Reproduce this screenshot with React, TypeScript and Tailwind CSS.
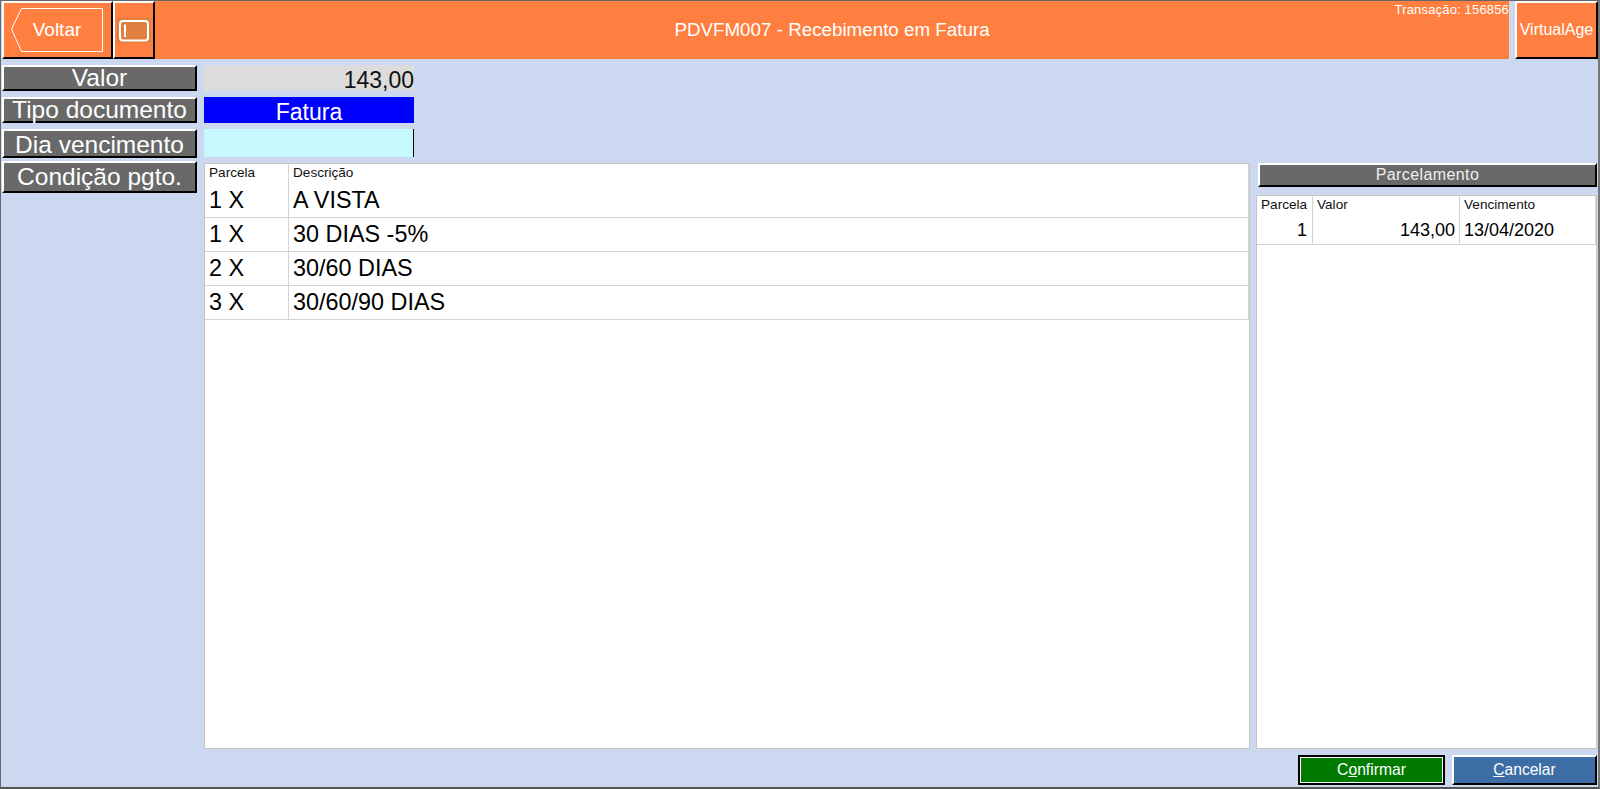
const font = "font-['Liberation_Sans',Arial,sans-serif]";

function Label({ text, h, mb, extra = "" }: { text: string; h: string; mb: string; extra?: string }) {
  return (
    <div className={`${h} ${mb} ${extra} flex items-center justify-center border-2 border-t-white border-l-white border-r-black border-b-black bg-[#696969] text-[24.5px] leading-none text-white`}>
      {text}
    </div>
  );
}

function GridHead({ cols, labels }: { cols: string; labels: string[] }) {
  return (
    <div className={`grid ${cols} h-[19px] text-[13.6px] leading-[17px] text-[#111]`}>
      {labels.map((l) => (
        <div key={l} className="border-r border-[#d4d4d4] pl-[4px] overflow-hidden whitespace-nowrap">{l}</div>
      ))}
    </div>
  );
}

export default function App() {
  const rows = [
    ["1 X", "A VISTA"],
    ["1 X", "30 DIAS -5%"],
    ["2 X", "30/60 DIAS"],
    ["3 X", "30/60/90 DIAS"],
  ];
  return (
    <div className={`${font} w-[1600px] h-[789px] overflow-hidden flex flex-col bg-[#ccd8ef] border-t border-t-[#666] border-l border-l-[#666] border-r-2 border-r-[#777] border-b-2 border-b-[#555] pl-[1px]`}>
      <header className="flex h-[58px] shrink-0 text-white">
        <button className="relative w-[111px] flex items-center justify-center border-2 border-t-white border-l-white border-r-black border-b-black bg-[#ff7f41] text-[19px] pr-[1px]">
          <svg className="absolute left-0 top-0" width="107" height="54" viewBox="0 0 107 54">
            <path d="M17.5 5.5H98.5V48.5H17.5L7.5 26Z" fill="none" stroke="#fff" strokeWidth="1" />
          </svg>
          <span className="relative">Voltar</span>
        </button>
        <button className="w-[42px] flex items-center justify-center border-2 border-t-white border-l-white border-r-black border-b-black bg-[#ff7f41]">
          <svg width="34" height="25" viewBox="0 0 34 25">
            <rect width="34" height="25" fill="#de8140" />
            <rect x="3" y="3" width="28" height="19.5" rx="3" fill="none" stroke="#fff" strokeWidth="2" />
            <path d="M8 6.5V19" stroke="#fff" strokeWidth="2" />
          </svg>
        </button>
        <div className="relative flex-1 flex items-center justify-center bg-[#ff7f41] text-[18.8px]">
          PDVFM007 - Recebimento em Fatura
          <span className="absolute right-0 top-[1px] text-[13px] leading-[16px] tracking-[0.17px]">Transação: 156856</span>
        </div>
        <button className="ml-[6px] w-[83px] flex items-center justify-center border-2 border-t-white border-l-white border-r-black border-b-black bg-[#ff7f41] text-[16px]">
          VirtualAge
        </button>
      </header>

      <main className="flex-1 min-h-0 flex flex-col pt-[6px] pr-[1px]">
        <div className="flex-1 min-h-0 flex">
          <aside className="w-[195px] shrink-0 flex flex-col">
            <Label text="Valor" h="h-[26px]" mb="mb-[6px]" />
            <Label text="Tipo documento" h="h-[26px]" mb="mb-[6px]" />
            <Label text="Dia vencimento" h="h-[29px]" mb="mb-[3px]" extra="pt-[3px]" />
            <Label text="Condição pgto." h="h-[32px]" mb="mb-0" />
          </aside>

          <div className="ml-[7px] flex-1 min-w-0 flex flex-col">
            <div className="w-[210px] h-[26px] mb-[6px] bg-[#dcdcdc] text-[23px] leading-[30px] text-right text-[#111]">143,00</div>
            <div className="w-[210px] h-[26px] mb-[6px] bg-[#0000ff] text-[23px] leading-[31px] text-center text-white">Fatura</div>
            <div className="w-[210px] h-[28px] mb-[6px] bg-[#c6f8fe] border-r border-r-black"></div>

            <div className="flex-1 min-h-0 flex">
              <section className="w-[1046px] bg-white border border-[#c4c4c4]">
                <GridHead cols="grid-cols-[84px_960px]" labels={["Parcela", "Descrição"]} />
                {rows.map(([a, b], i) => (
                  <div key={i} className={`grid grid-cols-[84px_960px] ${i === 0 ? "h-[35px] leading-[34px]" : "h-[34px] leading-[32px]"} border-b border-[#d4d4d4] text-[23.4px] text-black`}>
                    <div className="border-r border-[#d4d4d4] pl-[4px]">{a}</div>
                    <div className="border-r border-[#d4d4d4] pl-[4px]">{b}</div>
                  </div>
                ))}
              </section>

              <section className="ml-[6px] flex-1 min-w-0 flex flex-col">
                <div className="ml-[2px] h-[24px] mb-[8px] flex items-center justify-center border-2 border-t-white border-l-white border-r-black border-b-black bg-[#696969] text-[16px] tracking-[0.4px] text-[#f0f0f0]">
                  Parcelamento
                </div>
                <div className="flex-1 min-h-0 bg-white border border-[#c4c4c4]">
                  <GridHead cols="grid-cols-[56px_147px_136px]" labels={["Parcela", "Valor", "Vencimento"]} />
                  <div className="grid grid-cols-[56px_147px_136px] h-[30px] border-b border-[#d4d4d4] text-[18px] leading-[30px] text-black">
                    <div className="border-r border-[#d4d4d4] text-right pr-[5px]">1</div>
                    <div className="border-r border-[#d4d4d4] text-right pr-[4px]">143,00</div>
                    <div className="border-r border-[#d4d4d4] pl-[4px]">13/04/2020</div>
                  </div>
                </div>
              </section>
            </div>
          </div>
        </div>

        <footer className="h-[38px] shrink-0 flex justify-end items-start pt-[6px] gap-[7px]">
          <button className="w-[147px] h-[30px] flex items-center justify-center border-2 border-black outline outline-1 -outline-offset-3 outline-white bg-[#007b00] text-[15.7px] text-white">
            <span>C<u>o</u>nfirmar</span>
          </button>
          <button className="w-[145px] h-[30px] flex items-center justify-center border-2 border-t-white border-l-white border-r-black border-b-black bg-[#3c6ea5] text-[15.6px] text-white">
            <span><u>C</u>ancelar</span>
          </button>
        </footer>
      </main>
    </div>
  );
}
